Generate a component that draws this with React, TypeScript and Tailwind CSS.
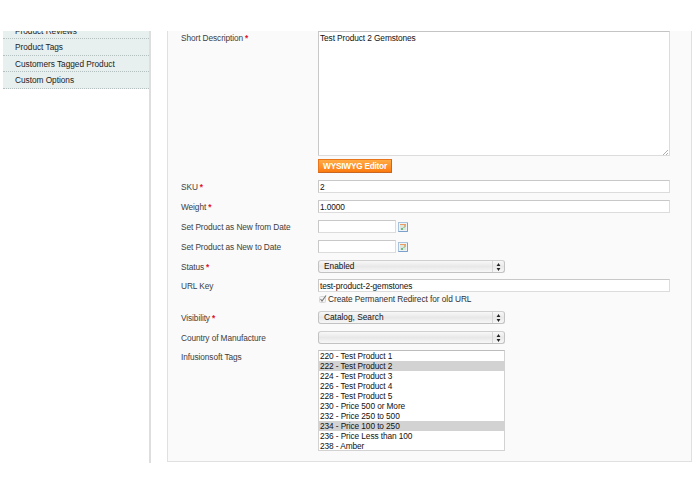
import type { ReactNode } from "react";

const menuItems = ["Product Tags", "Customers Tagged Product", "Custom Options"];

const tags = [
  { label: "220 - Test Product 1" },
  { label: "222 - Test Product 2", selected: true },
  { label: "224 - Test Product 3" },
  { label: "226 - Test Product 4" },
  { label: "228 - Test Product 5" },
  { label: "230 - Price 500 or More" },
  { label: "232 - Price 250 to 500" },
  { label: "234 - Price 100 to 250", selected: true },
  { label: "236 - Price Less than 100" },
  { label: "238 - Amber" },
];

function Row({
  label,
  required,
  className,
  children,
}: {
  label: string;
  required?: boolean;
  className: string;
  children: ReactNode;
}) {
  return (
    <div className={`flex items-start ${className}`}>
      <div className="w-[137px] shrink-0 whitespace-nowrap pt-px leading-[12px] text-[#404040]">
        {label}
        {required && <span className="ml-[2px] font-bold text-[#e0142c]">*</span>}
      </div>
      {children}
    </div>
  );
}

function TextField({ value }: { value: string }) {
  return (
    <div className="h-[13px] w-[352px] whitespace-nowrap border border-[#dcdcdc] border-t-[#c8c8c8] border-l-[#c8c8c8] bg-white pl-px leading-[12px]">
      {value}
    </div>
  );
}

function DateField() {
  return (
    <div className="flex items-center gap-[2px]">
      <div className="h-[13px] w-[78px] border border-[#dcdcdc] border-t-[#c8c8c8] border-l-[#c8c8c8] bg-white" />
      <svg width="10" height="10" viewBox="0 0 10 10">
        <rect x=".5" y=".5" width="9" height="9" fill="#eef3f5" stroke="#a9c3dd" />
        <path d="M.5 9.5h9V1" fill="none" stroke="#7ba0cc" />
        <rect x="2" y="2" width="6" height="1" fill="#ec9c62" />
        <rect x="2" y="3" width="6" height="5" fill="#dbe6df" />
        <rect x="6" y="3" width="2" height="2" fill="#d9b57e" />
        <rect x="3" y="6" width="2" height="2" fill="#72b881" />
        <rect x="5" y="5" width="2" height="1" fill="#a9c9b0" />
      </svg>
    </div>
  );
}

function SelectField({ value }: { value?: string }) {
  return (
    <div className="flex h-[13px] w-[187px] overflow-hidden rounded-[3px] border border-[#c2c2c2] border-t-[#cfcfcf] bg-linear-to-b from-[#f8f8f8] via-[#e8e8e8] to-[#f7f7f7]">
      <div className="flex-1 whitespace-nowrap pl-[5px] leading-[11px] tracking-normal">{value}</div>
      <div className="flex w-[12px] items-center justify-center border-l border-[#d6d6d6]">
        <svg width="5" height="8" viewBox="0 0 5 8" fill="#222">
          <path d="M2.5 0 4.4 3H.6zM2.5 8 .6 5h3.8z" />
        </svg>
      </div>
    </div>
  );
}

export default function App() {
  return (
    <div className="h-[494px] w-[695px] overflow-hidden bg-white pt-[31px] font-['Liberation_Sans',Arial,sans-serif] text-[8.3px] tracking-[-0.09px] text-[#111]">
      <div className="flex h-[432px] items-start overflow-hidden pl-[3px]">
        <aside className="h-full w-[148px] shrink-0 border-r-2 border-[#dedede] tracking-[-0.03px] text-[#222]">
          <div className="flex h-[8px] items-end overflow-hidden border-b border-dotted border-[#b4bfbf] bg-[#e7efef] pb-px pl-[12px] leading-[12px]">
            Product Reviews
          </div>
          {menuItems.map((item) => (
            <div
              key={item}
              className="h-[16.67px] whitespace-nowrap border-b border-dotted border-[#b4bfbf] bg-[#e7efef] pl-[12px] leading-[17px]"
            >
              {item}
            </div>
          ))}
        </aside>

        <main className="ml-4 h-[431px] w-[525px] border-x border-b border-[#e0e0e0] bg-[#fafafa] pl-[13px]">
          <Row label="Short Description" required className="h-[149px]">
            <div>
              <div className="relative h-[125px] w-[352px] border border-[#dcdcdc] border-t-[#c4c4c4] border-l-[#c8c8c8] bg-white pl-px leading-[13px]">
                Test Product 2 Gemstones
                <svg className="absolute right-0 bottom-0" width="6" height="6" viewBox="0 0 6 6" stroke="#999" strokeWidth=".8">
                  <path d="M0 6 5 1M3 6l2-2" />
                </svg>
              </div>
              <button className="mt-[3px] block h-[14px] w-[74px] whitespace-nowrap border border-[#e8741c] border-r-[#c86624] border-b-[#c86624] bg-linear-to-b from-[#ffab43] to-[#fb7a08] leading-[13px] font-bold tracking-[-0.25px] text-white">
                WYSIWYG Editor
              </button>
            </div>
          </Row>
          <Row label="SKU" required className="h-[20px]">
            <TextField value="2" />
          </Row>
          <Row label="Weight" required className="h-[20px]">
            <TextField value="1.0000" />
          </Row>
          <Row label="Set Product as New from Date" className="h-[20px]">
            <DateField />
          </Row>
          <Row label="Set Product as New to Date" className="h-[20px]">
            <DateField />
          </Row>
          <Row label="Status" required className="h-[19px]">
            <SelectField value="Enabled" />
          </Row>
          <Row label="URL Key" className="h-[32px]">
            <div>
              <TextField value="test-product-2-gemstones" />
              <div className="mt-[2px] flex h-[10px] items-center gap-px leading-[10px] whitespace-nowrap tracking-[-0.05px] text-[#303030]">
                <svg className="ml-px" width="8" height="8" viewBox="0 0 8 8" fill="none">
                  <rect x=".5" y="1.5" width="6" height="6" rx="1" fill="#f4f4f4" stroke="#d6d6d6" />
                  <path d="m1.5 4 1.5 2L7 .5" stroke="#777" strokeWidth="1.1" />
                </svg>
                Create Permanent Redirect for old URL
              </div>
            </div>
          </Row>
          <Row label="Visibility" required className="h-[20px]">
            <SelectField value="Catalog, Search" />
          </Row>
          <Row label="Country of Manufacture" className="h-[19px]">
            <SelectField />
          </Row>
          <Row label="Infusionsoft Tags" className="h-[101px]">
            <div className="h-[101px] w-[187px] border border-[#d2d2d2] border-t-[#bcbcbc] bg-white">
              {tags.map((tag) => (
                <div
                  key={tag.label}
                  className={`h-[10px] pl-px leading-[10px] whitespace-nowrap ${tag.selected ? "bg-[#d2d2d2]" : ""}`}
                >
                  {tag.label}
                </div>
              ))}
            </div>
          </Row>
        </main>
      </div>
    </div>
  );
}
